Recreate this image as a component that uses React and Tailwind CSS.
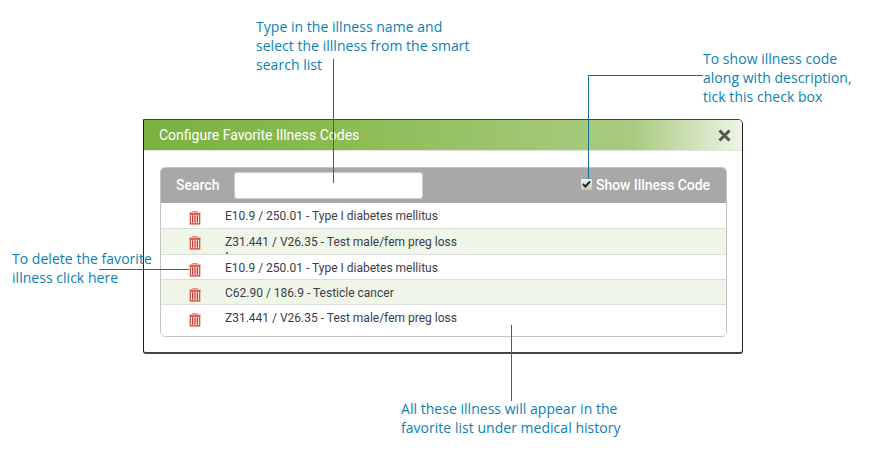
const rows = [
  { t: "E10.9 / 250.01 - Type I diabetes mellitus", h: "h-[26px]", bg: "bg-white", i: "mt-[2px]" },
  { t: "Z31.441 / V26.35 - Test male/fem preg loss", h: "h-[26px]", bg: "bg-[#eff6e8]", i: "mt-[1px]", dot: true },
  { t: "E10.9 / 250.01 - Type I diabetes mellitus", h: "h-[25px]", bg: "bg-white", i: "mt-[2px]" },
  { t: "C62.90 / 186.9 - Testicle cancer", h: "h-[25px]", bg: "bg-[#eff6e8]", i: "mt-[2px]" },
  { t: "Z31.441 / V26.35 - Test male/fem preg loss", h: "h-[31px]", bg: "bg-white", i: "mt-[2px]" },
];

function Trash({ className }) {
  return (
    <svg width="12" height="15" viewBox="0 0 14 16" className={`shrink-0 ${className}`}>
      <path d="M4.5 2.5V1h5v1.5" fill="none" stroke="#e08a84" strokeWidth="1.2" />
      <rect x="0.5" y="2" width="13" height="2" fill="#e58f89" />
      <path d="M1.5 4h11v11.5h-11z" fill="#fbeeec" stroke="#cc3b30" strokeWidth="1.3" />
      <path d="M4.2 5.5v8.5M7 5.5v8.5M9.8 5.5v8.5" stroke="#cc3b30" strokeWidth="1.5" />
    </svg>
  );
}

function Note({ className, children }) {
  return (
    <div className={`absolute font-['Open_Sans',sans-serif] text-[14px] leading-[19px] tracking-[0.03px] text-[#0b7fb5] whitespace-nowrap ${className}`}>
      {children}
    </div>
  );
}

function Line({ className }) {
  return <div className={`absolute bg-[#156f96] ${className}`} />;
}

export default function App() {
  return (
    <div className="relative w-[872px] h-[455px] bg-white overflow-hidden font-['Roboto',sans-serif]">
      <div className="pt-[119px] pl-[143px]">
        <div className="w-[600px] h-[235px] bg-white border-l border-t border-r border-b-2 border-[#222] border-t-[#444] border-b-[#444] rounded-tr-[5px] rounded-b-[3px] flex flex-col">
          <div className="h-[31px] shrink-0 flex items-center justify-between pl-[15px] pr-[10px] rounded-tr-[4px] border-b border-[#dfe6d8] bg-[linear-gradient(90deg,#7ab13f_0%,#8cbc54_35%,#a3c878_70%,#a9cb80_82%,#eef4e6_100%)]">
            <span className="text-white text-[14px]">Configure Favorite Illness Codes</span>
            <svg width="13" height="13" viewBox="0 0 13 13" className="mr-[1px]">
              <path d="M1.5 1.5l10 10M11.5 1.5l-10 10" stroke="#555" strokeWidth="3" />
            </svg>
          </div>
          <div className="px-[16px] pt-[16px]">
            <div className="w-[567px] h-[170px] border border-[#c4c4c4] rounded-[5px] overflow-hidden flex flex-col">
              <div className="h-[35px] shrink-0 bg-[#a8a8a8] flex items-center justify-between pl-[15px] pr-[16px]">
                <div className="flex items-center gap-[15px]">
                  <span className="text-white text-[14px] font-medium">Search</span>
                  <input className="w-[189px] h-[27px] bg-white rounded-[3px] border border-[#ccc]" />
                </div>
                <label className="flex items-center gap-[4px] text-white text-[14px] font-medium tracking-[-0.05px]">
                  <span className="w-[11px] h-[11px] mb-[3px] flex items-center justify-center rounded-[1px] bg-[linear-gradient(180deg,#f4f4f4,#c4c4c4)]">
                    <svg width="9" height="8" viewBox="0 0 10 9">
                      <path d="M1 4.5l2.8 2.8L9 1.5" fill="none" stroke="#222" strokeWidth="2.2" />
                    </svg>
                  </span>
                  Show Illness Code
                </label>
              </div>
              {rows.map((r, i) => (
                <div key={i} className={`${r.h} ${r.bg} pt-[5px] shrink-0 relative flex items-start pl-[28px] border-b border-[#dcdcdc] last:border-b-0 text-[12px] leading-[16px] text-[#3c3c4a]`}>
                  <Trash className={r.i} />
                  <span className="ml-[24px]">{r.t}</span>
                  {r.dot && <span className="absolute left-[65px] bottom-0 w-[2px] h-[2px] bg-[#777]" />}
                </div>
              ))}
            </div>
          </div>
        </div>
      </div>

      <Note className="left-[256px] top-[17px]">
        Type in the illness name and<br />select the illlness from the smart<br />search list
      </Note>
      <Line className="left-[333px] top-[59px] w-px h-[124px]" />

      <Note className="left-[703px] top-[49px]">
        To show illness code<br />along with description,<br />tick this check box
      </Note>
      <Line className="left-[588px] top-[75px] w-[115px] h-px" />
      <Line className="left-[588px] top-[75px] w-px h-[104px]" />

      <Note className="left-[12px] top-[249px]">
        To delete the favorite<br />illness click here
      </Note>
      <Line className="left-[99px] top-[269px] w-[90px] h-px" />

      <Note className="left-[401px] top-[399px]">
        All these illness will appear in the<br />favorite list under medical history
      </Note>
      <Line className="left-[511px] top-[325px] w-px h-[76px]" />
    </div>
  );
}
